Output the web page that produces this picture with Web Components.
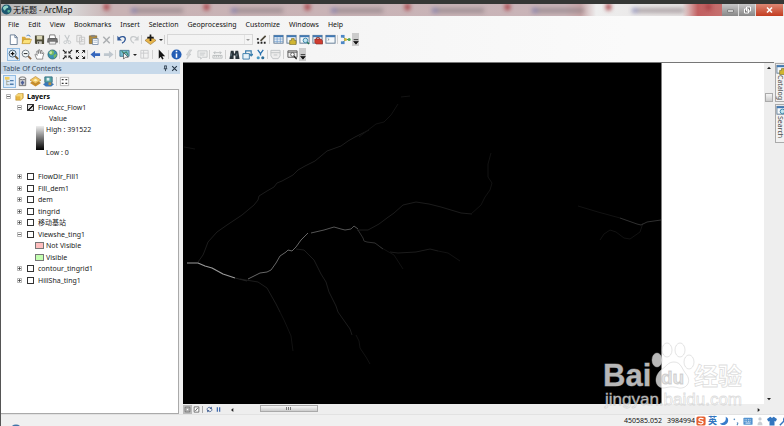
<!DOCTYPE html>
<html lang="zh-CN">
<head>
<meta charset="utf-8">
<title>无标题 - ArcMap</title>
<style>
html,body{margin:0;height:100%}
body{font:7px/11px "Noto Sans","Noto Sans CJK SC",sans-serif;color:#111;overflow:hidden}
</style>
</head>
<body>
<arc-window>
  <title-bar slot="title">无标题 - ArcMap</title-bar>
  <menu-bar slot="menu"></menu-bar>
  <tool-bar slot="tools" kind="standard"></tool-bar>
  <tool-bar slot="tools" kind="navigate"></tool-bar>
  <toc-panel slot="left" heading="Table Of Contents"></toc-panel>
  <map-view slot="main"></map-view>
  <side-tab slot="right" icon="catalog">Catalog</side-tab>
  <side-tab slot="right" icon="search">Search</side-tab>
  <status-bar slot="status"></status-bar>
</arc-window>
<script>
const define = (name, render, after) => customElements.define(name, class extends HTMLElement {
  connectedCallback() {
    if (this.shadowRoot) return;
    this.attachShadow({mode: 'open'}).innerHTML = render(this);
    if (after) after(this);
  }
});

const win = (body) => `<rect x="1" y="1.5" width="10" height="8.5" fill="#f4f8fb" stroke="#5f7892"/><path d="M1 2.500h10" stroke="#3f79b5" stroke-width="2"/>${body}`;
const icons = {
  blank: '',
  logo: '<circle cx="6" cy="6" r="5.500" fill="#1c5770"/><path d="M2 4c2-3 5-3 6-1 0 2-2 1-3 3s-2 1-3-2z" fill="#8fd3c5"/><path d="M7 7c2-1 3 0 3 1-1 2-3 2-3 0z" fill="#5cb49a"/>',
  new: '<path d="M2.500 1h5l2.500 2.500V11.500h-7.500z" fill="#fff" stroke="#667a92"/><path d="M7.500 1v3h2.500" fill="none" stroke="#667a92"/>',
  open: '<path d="M1 10.500V3h3.500l1 1.500H10v6z" fill="#d9a83a"/><path d="M1 10.500l2-4.500h8.500l-2 4.500z" fill="#fbe27a" stroke="#b58a28" stroke-width=".6"/><path d="M6 2c2-1.500 4-.5 4 1" fill="none" stroke="#4d7fb8"/>',
  save: '<path d="M1 1.500h10v9.500H2L1 10z" fill="#4d4b37"/><path d="M3 2h6v4H3z" fill="#d9d6b5"/><path d="M3.500 8h5v3h-5z" fill="#c8c6c0"/><path d="M5 8.500v2" stroke="#333"/>',
  print: '<path d="M3 1h5.500l1 4h-7z" fill="#fff" stroke="#555" stroke-width=".8"/><path d="M1 5h10l.5 4h-11z" fill="#777" stroke="#444" stroke-width=".6"/><path d="M2.500 8h7v3h-7z" fill="#eee" stroke="#555" stroke-width=".6"/>',
  cut: '<path d="M3 1l4 7M8 1L5 8" stroke="#c4c8ca" stroke-width="1.200"/><circle cx="3.500" cy="9" r="1.500" fill="none" stroke="#c4c8ca"/><circle cx="8" cy="9" r="1.500" fill="none" stroke="#c4c8ca"/>',
  copy: '<path d="M2 1.500h5v7H2zM5 3.500h5.500v7.500H5z" fill="#eee" stroke="#c5c5c5"/><path d="M6.500 6h3M6.500 8h3" stroke="#ccc"/>',
  paste: '<path d="M1.500 2h8v8.500h-8z" fill="#b18b3c" stroke="#755c2c" stroke-width=".7"/><path d="M3.500 1h4v2h-4z" fill="#888"/><path d="M5 5h6v6.500H5z" fill="#fff" stroke="#617998" stroke-width=".8"/><path d="M6 7h4M6 9h4" stroke="#8ba2bd" stroke-width=".7"/>',
  del: '<path d="M2.500 3l7 7M9.500 3l-7 7" stroke="#abaeb1" stroke-width="1.600"/>',
  undo: '<path d="M3 5c3-4 8-2 7 1.500-.5 2-2 3-3.500 3.500" fill="none" stroke="#2f5797" stroke-width="1.400"/><path d="M1.500 2v5h5z" fill="#2f5797"/>',
  redo: '<path d="M9 5C6 1 1 3 2 6.500c.5 2 2 3 3.500 3.500" fill="none" stroke="#c7cacc" stroke-width="1.400"/><path d="M10.500 2v5h-5z" fill="#c7cacc"/>',
  add: '<path d="M0 7l6-4.500L12 7l-6 4.500z" fill="#e8b64c" stroke="#8f6c2c" stroke-width=".6"/><path d="M6 .5v7M2.500 4h7" stroke="#1b1b1b" stroke-width="1.800"/>',
  editor: '<path d="M1.500 9.500h9" stroke="#222" stroke-dasharray="2 1.500" stroke-width="2"/><path d="M10.500 2L5 7.500" stroke="#4c4637" stroke-width="1.800"/><circle cx="2" cy="5.500" r="1.200" fill="#333"/>',
  table: win('<path d="M1 5.500h10M1 8h10M4.500 3.500V10M8 3.500V10" stroke="#6c9acb" stroke-width=".8"/>'),
  catalog: win('<path d="M4 7h2V5h3v2h2v4.500H4z" fill="#d0b530" stroke="#766b28" stroke-width=".7"/>'),
  search: win('<circle cx="7" cy="7" r="2.500" fill="#bfe5ef" stroke="#3680a5"/><path d="M9 9l2 2" stroke="#207452" stroke-width="1.500"/>'),
  toolbox: win('<path d="M3 5.500h7l1.500 2v3.500H4.500L3 9z" fill="#cf3c30" stroke="#7e2721" stroke-width=".6"/><path d="M5 5.500V4h3v1.500" fill="none" stroke="#842a24"/>'),
  python: win('<path d="M3 5l1.500 1L3 7" fill="none" stroke="#777" stroke-width=".7"/>'),
  model: '<path d="M3 2.500l3 3.500-3 3.500M6 6h4" fill="none" stroke="#3b7d4d"/><path d="M1 1h4v3H1z" fill="#4d87c7"/><path d="M1 8h4v3H1z" fill="#4d87c7"/><circle cx="6" cy="6" r="1.700" fill="#d5b638"/><circle cx="10" cy="6" r="1.700" fill="#51a35b"/>',
  over: '<path d="M4 5h5M4 7h5l-2.500 3z" fill="#111" stroke="#111" stroke-width=".8"/>',
  zoomin: '<path d="M7.500 7.500l3.500 3.500" stroke="#6d5432" stroke-width="2"/><circle cx="5" cy="5" r="3.800" fill="#edf7fd" stroke="#39566f"/><path d="M3 5h4M5 3v4" stroke="#111" stroke-width="1.300"/>',
  zoomout: '<path d="M7.500 7.500l3.500 3.500" stroke="#8d6845" stroke-width="2"/><circle cx="5" cy="5" r="3.800" fill="#f5fafb" stroke="#6c7780"/><path d="M3 5h4" stroke="#333" stroke-width="1.200"/>',
  pan: '<path d="M3 11L1 6l1-.5 1.500 1.500L3 2.500l1-.5 1 3V1l1.200-.2L7 5l.5-3.500 1.200.2V5.500L10 4l.8.6L9.500 9v2z" fill="#fff" stroke="#6b6b6b" stroke-width=".8"/>',
  globe: '<circle cx="6" cy="6" r="5" fill="#3b91b6" stroke="#245b58" stroke-width=".7"/><path d="M2 4l3-3 3 2-1 3-3 1zM7 7l3-2 .5 2-2.500 3z" fill="#79bc5e"/><circle cx="4" cy="4" r="1.500" fill="#e5f6cf" opacity=".7"/>',
  fixin: '<path d="M1 1l3 3M11 1L8 4M1 11l3-3M11 11L8 8" stroke="#222" stroke-width="1.400"/><path d="M5 2v3H2zM7 2v3h3zM5 10V7H2zM7 10V7h3z" fill="#222"/>',
  fixout: '<path d="M2 2l2.500 2.500M10 2L7.500 4.500M2 10l2.500-2.500M10 10L7.500 7.500" stroke="#222"/><path d="M1 1h3.500L1 4.500zM11 1H7.500L11 4.500zM1 11h3.500L1 7.500zM11 11H7.500L11 7.500z" fill="#222"/>',
  back: '<path d="M.5 6l5-4v2.500H11v3H5.500V10z" fill="#3566bd"/>',
  fwd: '<path d="M11.500 6l-5-4v2.500H1v3h5.500V10z" fill="#bfc7ce"/>',
  select: '<path d="M1 1.500h10V8H1z" fill="#75bdd0" stroke="#497b94"/><path d="M3 2l2 3 3-2 2 4" fill="none" stroke="#317a4d"/><path d="M5 4v7l2-2h3z" fill="#fff" stroke="#333" stroke-width=".7"/>',
  clear: '<path d="M2 1.500h8v8.500H2zM2 4.500h8M5 1.500V10" fill="none" stroke="#cacccd"/>',
  pointer: '<path d="M3 .5v10l2.200-2 1.600 3 1.500-.8L6.800 8H10z" fill="#151515"/>',
  info: '<circle cx="6" cy="6" r="5.500" fill="#245eb5"/><path d="M6 5v4.500M6 2v1.500" stroke="#fff" stroke-width="1.700"/>',
  start: '<circle cx="6" cy="6" r="5.500" fill="#3f74a8"/>',
  link: '<path d="M8.500 1L5.500 5.500h2L3 11l1.500-4.500h-2L6 1z" fill="#d7d9da" stroke="#bfc2c4" stroke-width=".6"/>',
  popup: '<path d="M1 2h10v7H6l-2 2V9H1zM3 4.500h6M3 6.500h5" fill="#eee" stroke="#bfc2c4" stroke-width=".9"/>',
  measure: '<path d="M1 7h10v3H1zM3 7v2M5 7v2M7 7v2M9 7v2M2 4h8M3.500 2.500L2 4l1.500 1.500M8.500 2.500L10 4 8.500 5.500" fill="none" stroke="#b5b8ba" stroke-width=".9"/>',
  find: '<path d="M2 2h3l.5 3h1L7 2h3l1.500 9H7V7H5v4H.5z" fill="#29343b"/><path d="M2 8l.5-3M8.500 8V5" stroke="#8ba0ac" stroke-width=".8"/>',
  route: '<path d="M1 5h7v6H1z" fill="#e8f2f8" stroke="#397cab"/><path d="M4 5V2h6v5M8 5.500l2 2 2-2" fill="none" stroke="#397cab" stroke-width="1.300"/>',
  xy: '<path d="M3 1l3 4 3-4M6 5v2" fill="none" stroke="#2670ae" stroke-width="1.400"/><circle cx="3.500" cy="9.500" r="1.700" fill="#4d9bc4"/><circle cx="8.500" cy="9.500" r="1.700" fill="#2f6e98"/>',
  time: '<path d="M1 1.500h10v6l-2 3H3l-2-3z" fill="#ededed" stroke="#c0c3c5"/><path d="M1 4h10M4 6.500h4" stroke="#c0c3c5"/>',
  viewer: '<path d="M1 2h10v7H1z" fill="#eee" stroke="#555"/><path d="M1 3.500h10" stroke="#555"/><circle cx="6" cy="6" r="2" fill="#fff" stroke="#555"/><path d="M7.500 7.500l3 3.500" stroke="#222" stroke-width="1.500"/>',
  order: '<path d="M1 1h5v3H1z" fill="#f1cc5c"/><path d="M3 4v6M3 6h3M3 9.500h3" stroke="#8c8b76" stroke-width=".7"/><path d="M6.500 5h4M6.500 9h4" stroke="#507fae" stroke-width="1.500"/>',
  source: '<path d="M2.500 2.500h7v8h-7z" fill="#c7c7ca" stroke="#555" stroke-width=".8"/><ellipse cx="6" cy="2.500" rx="3.500" ry="1.500" fill="#eee" stroke="#555" stroke-width=".8"/><path d="M6 5l2 2-2 3-2-3z" fill="#4e6098"/>',
  visible: '<path d="M0 7.500l6 4 6-4-6-4z" fill="#c88d2b"/><path d="M0 4.500l6-4 6 4-6 4z" fill="#f1c561" stroke="#aa7929" stroke-width=".6"/><path d="M3.500 4.500L6 3l2.500 1.500L6 6z" fill="#fff1b9"/>',
  selection: '<path d="M2 1h8v6H2z" fill="#56a6a4" stroke="#376d87"/><path d="M4 2h3v3H4z" fill="#e1eef2"/><path d="M0 9l3-2h6l3 2-3 2.500H3z" fill="#3977ba"/><path d="M6 7h3v3H6z" fill="#b8923e"/>',
  options: '<path d="M1.500 1.500h9v9h-9z" fill="#fff" stroke="#a2a2a2" stroke-width=".8"/><path d="M3 4h2M3 8h2M7 4h2M7 8h2" stroke="#333" stroke-width="1.500"/>',
  layers: '<path d="M1 5l3-3h7v6l-3 3H1z" fill="#e8b540" stroke="#a67b24" stroke-width=".6"/><path d="M3 3h6v5M1 5h7v6" fill="none" stroke="#fff0a5"/>',
  data: '<path d="M2 2h8v8H2z" fill="#ddd" stroke="#444"/><path d="M4 4h4v4H4z" fill="#fff" stroke="#777"/>',
  layout: '<path d="M2 1.500h8v9H2z" fill="#fff" stroke="#555" stroke-width="1.300"/><path d="M4 8.500l4-5" stroke="#555" stroke-width="1.500"/>',
  refresh: '<path d="M2 7c-1-5 5-6 7-3M10 5c1 5-5 6-7 3" fill="none" stroke="#3c5b91" stroke-width="1.400"/><path d="M10 1v4H6zM2 11V7h4z" fill="#3c5b91"/>',
  pause: '<path d="M4 2v8M8 2v8" stroke="#3460a8" stroke-width="2"/>',
  left: '<path d="M8 3v6L4.500 6z" fill="#222"/>', right: '<path d="M4 3v6l3.500-3z" fill="#222"/>',
  up: '<path d="M3 7.500h6L6 4z" fill="#222"/>', down: '<path d="M3 4.500h6L6 8z" fill="#222"/>',
  pin: '<path d="M4 1.500h4M4.500 1.500v5M7.500 1.500v5M3 6.500h6M6 6.500v4" fill="none" stroke="#234" stroke-width="1.400"/>',
  close: '<path d="M2 2l8 8M10 2l-8 8" stroke="#234" stroke-width="1.800"/>',
  sogou: '<rect x=".5" y=".5" width="11" height="11" rx="2" fill="#e65f2f"/><path d="M9 3.500C6 2 3 3 3.500 5s5 .5 5 2.500S5 10 2.500 8.500" fill="none" stroke="#fff" stroke-width="1.500"/>',
  moon: '<path d="M8 1c1 5-2 8-7 8 4 4 10 1 10-4 0-2-1-3-3-4z" fill="#397ccb"/>',
  punct: '<circle cx="4" cy="4" r="1" fill="#5689bd"/><path d="M7 8c2 0 1 2 0 3" fill="none" stroke="#5689bd" stroke-width="1.300"/>',
  keyboard: '<rect x=".5" y="2" width="11" height="8.500" rx="1" fill="#5192d0"/><path d="M2 4.500h8M2 6.500h8" stroke="#fff" stroke-dasharray="1 1"/><path d="M3 8.500h6" stroke="#fff"/>',
  person: '<circle cx="6" cy="3.500" r="2" fill="#c9ced4"/><path d="M3 11c0-6 6-6 6 0z" fill="#c9ced4"/>',
  shirt: '<path d="M4 1l2 1.500L8 1l4 2.500-1.500 3L9 6v5.500H3V6l-1.500.5L0 3.500z" fill="#3375bf"/>',
  wrench: '<path d="M1 11l5-5M6 6c-1-3 1-5 3-4L7.500 4l1.500 1.500 2-1.500c1 3-2 5-5 2z" fill="none" stroke="#3375bf" stroke-width="1.800"/>'
};

define('arc-icon', el => `<style>:host{display:block;width:11px;height:11px;flex:none}svg{display:block;width:100%;height:100%}</style><svg viewBox="0 0 12 12" aria-hidden="true">${icons[el.getAttribute('name')]}</svg>`);

define('tool-button', el => `<style>
:host{display:flex;width:13px;height:13px;flex:none}
:host([caret]){width:21px}
button{all:unset;box-sizing:border-box;flex:1;display:flex;align-items:center;justify-content:center;gap:3px}
:host([active]) button{background:#dcebfa;outline:1px solid #92bce2;outline-offset:-1px}
:host([over]){width:7px}
:host([over]) button{background:#ccc;overflow:hidden;align-items:flex-end}
i{width:0;border:2px solid transparent;border-top-color:#222;border-bottom:0}
</style><button type="button" aria-label="${el.getAttribute('icon')}"><arc-icon name="${el.getAttribute('icon')}"></arc-icon>${el.hasAttribute('caret') ? '<i></i>' : ''}</button>`);

define('arc-window', () => `<style>
:host{display:flex;flex-direction:column;height:100vh;background:#f0f0f0;box-sizing:border-box;border-left:1px solid #555}
header{background:linear-gradient(90deg,#f0f0f0,#fafafa 80%);height:46px;flex:none;display:flex;flex-direction:column}
main{display:flex;flex:1;min-height:0}
aside{width:10px;flex:none;display:flex;flex-direction:column;gap:2px;background:#eee;padding-top:1px;overflow:hidden}
</style><slot name="title"></slot><header><slot name="menu"></slot><slot name="tools"></slot></header><main><slot name="left"></slot><slot name="main"></slot><aside><slot name="right"></slot></aside></main><slot name="status"></slot>`);

define('title-bar', () => `<style>
:host{display:flex;align-items:stretch;height:12px;flex:none;border-top:4px solid #353735;background:linear-gradient(90deg,#b4b4b4,#d8d6d6 9%,#c8b2b4 14%,#c9b4b8 72%,#c9a6a8 74%,#eee 76%,#e7e3e3 87%,#c25f60 89%,#c77674 93%,#aaa 94%);overflow:hidden;color:#111;font-size:8px}
h1{margin:0;font:inherit;line-height:12px;display:flex;gap:1px;white-space:nowrap;width:92px;flex:none}
.tabs{flex:1;display:flex;justify-content:space-around;align-items:center;filter:blur(2px)}
.tabs i{width:46px;height:5px;background:#8b7d82;opacity:.6;border-left:6px solid #6a6aa2}
.tabs b{width:5px;height:6px;align-self:flex-start;background:#a83c42}
nav{display:flex;flex:none}
button{all:unset;width:16px;background:linear-gradient(#c6c6c6,#888);border-right:1px solid #ddd;display:grid;place-items:center}
button.x{width:27px;background:linear-gradient(#dd8874,#c33c20)}
svg{width:9px;height:8px;display:block}
</style><h1><arc-icon name="logo"></arc-icon><slot></slot></h1><div class="tabs"><b></b><i></i><b></b><i></i><b></b><i></i><b></b><i></i><b></b><i></i><b></b><i></i><b></b></div>
<nav><button aria-label="Minimize"><svg viewBox="0 0 9 8"><path d="M1.500 4h6v2h-6z" fill="#fff" stroke="#555" stroke-width=".6"/></svg></button><button aria-label="Restore"><svg viewBox="0 0 9 8"><path d="M3.500 1h4v4h-4zM1.500 3h4v4h-4z" fill="#777" stroke="#fff"/></svg></button><button class="x" aria-label="Close"><svg viewBox="0 0 9 8"><path d="M2 1.500l5 5M7 1.500l-5 5" stroke="#fff" stroke-width="1.600"/></svg></button></nav>`);

define('menu-bar', () => `<style>
:host{display:block;height:16px}
nav{display:flex;gap:9px;padding-left:7px;line-height:17px}
button{all:unset;white-space:nowrap}
</style><nav>${['File','Edit','View','Bookmarks','Insert','Selection','Geoprocessing','Customize','Windows','Help'].map(t => `<button type="button">${t}</button>`).join('')}</nav>`);

const sets = {
  standard: 'new open save print | cut copy paste del | undo redo | add^ | [] editor || table catalog search toolbox python | model over!',
  navigate: 'zoomin* zoomout pan globe | fixin fixout | back fwd | select^ clear || pointer | info link popup | measure || find route xy | time || viewer over!'
};
define('tool-bar', el => `<style>
:host{display:flex;align-items:center;height:15px;padding-left:6px}
hr{width:1px;height:9px;margin:0 1px 0 0;border:0;background:#d0d0d0;flex:none}
hr.wide{margin:0 2px 0 1px}
select{box-sizing:border-box;width:86px;height:11px;margin:0 2px 0 1px;font:inherit;border:1px solid #ccc;border-radius:0;padding:0;color:#aaa;appearance:none;background:linear-gradient(90deg,#f4f4f4 76px,#ddd 76px,#ddd 77px,#f4f4f4 77px)}
label{position:relative;display:flex}
label i{position:absolute;right:5px;top:5px;border:2px solid transparent;border-top-color:#999;border-bottom:0}
</style>${sets[el.getAttribute('kind')].split(' ').map(t =>
  t === '|' ? '<hr>' : t === '||' ? '<hr class="wide">' :
  t === '[]' ? '<label><select aria-label="Map scale" disabled></select><i></i></label>' :
  `<tool-button icon="${t.replace(/[\^*!]/, '')}"${t.endsWith('^') ? ' caret' : t.endsWith('*') ? ' active' : t.endsWith('!') ? ' over' : ''}></tool-button>`).join('')}`);

define('layer-row', el => {
  const open = el.hasAttribute('open'), check = el.hasAttribute('check'), swatch = el.getAttribute('swatch');
  const lead = swatch ? `<i style="background:${swatch}"></i>` : `<button type="button" aria-label="${open ? 'Collapse' : 'Expand'}"><svg viewBox="0 0 5 5"><path d="M.5.5h4v4h-4z" fill="#fff" stroke="#999" stroke-width=".7"/><path d="M1 2.500h3${open ? '' : 'M2.500 1v3'}" stroke="#333" stroke-width=".7"/></svg></button>`;
  return `<style>
:host{display:flex;align-items:center;height:11px;padding-left:16px;white-space:nowrap}
:host([root]){padding-left:5px;font-weight:bold;color:#000}
:host([swatch]){padding-left:34px}
button{all:unset;width:5px;height:5px;margin-right:5px;display:block}
:host([root]) button{margin-right:4px}
svg{display:block}
label{display:flex;align-items:center;gap:4px}
:host([root]) label{gap:3px}
input{appearance:none;box-sizing:border-box;width:7px;height:7px;margin:0;border:1px solid #333;background:#fff}
input:checked{background:linear-gradient(135deg,transparent 45%,#222 45% 65%,transparent 65%),#ddd}
i{box-sizing:border-box;width:9px;height:7px;border:1px solid #777;margin-right:2px}
arc-icon{width:9px;height:9px}
</style>${lead}<label>${el.hasAttribute('root') ? '<arc-icon name="layers"></arc-icon>' : swatch ? '' : `<input type="checkbox"${check ? ' checked' : ''}>`}<slot></slot></label>`;
});

define('toc-panel', el => `<style>
:host{display:flex;flex-direction:column;width:182px;flex:none;padding-right:3px;box-sizing:border-box;min-height:0}
header{display:flex;align-items:center;height:12px;background:#c7d9ea;color:#3b4c60;padding:0 1px 0 2px}
h2{margin:0;font:inherit;flex:1}
header button{all:unset;width:9px;height:9px;display:grid;place-items:center}
header arc-icon{width:7px;height:7px}
.bar{display:flex;align-items:center;height:15px;background:#f5f5f5;padding-left:2px}
hr{width:1px;height:9px;margin:0 1px;border:0;background:#ccc}
section{flex:1;min-height:0;background:#fff;border:1px solid #aaa;border-left:0;margin-right:1px;padding-top:1px;overflow:hidden;color:#222}
.value{padding-left:48px}
.ramp{display:grid;grid-template-columns:8px 1fr;column-gap:2px;padding-left:35px;height:34px;margin-bottom:13px}
.ramp b{height:24px;margin-top:2px;background:linear-gradient(#eee,#000)}
.ramp div{display:flex;flex-direction:column;justify-content:space-between;height:34px}
.list layer-row:nth-child(even){height:12px}
</style><header><h2>${el.getAttribute('heading')}</h2><button aria-label="Auto hide"><arc-icon name="pin"></arc-icon></button><button aria-label="Close panel"><arc-icon name="close"></arc-icon></button></header>
<div class="bar"><tool-button icon="order" active></tool-button><tool-button icon="source"></tool-button><tool-button icon="visible"></tool-button><tool-button icon="selection"></tool-button><hr><tool-button icon="options"></tool-button></div>
<section><layer-row root open>Layers</layer-row><layer-row open check>FlowAcc_Flow1</layer-row><div class="value">Value</div>
<div class="ramp"><b></b><div><span>High : 391522</span><span>Low : 0</span></div></div>
<div class="list"><layer-row>FlowDir_Fill1</layer-row><layer-row>Fill_dem1</layer-row><layer-row>dem</layer-row><layer-row>tingrid</layer-row><layer-row>移动基站</layer-row><layer-row open>Viewshe_ting1</layer-row><layer-row swatch="#ffbebe">Not Visible</layer-row><layer-row swatch="#c3ffb0">Visible</layer-row><layer-row>contour_tingrid1</layer-row><layer-row>HillSha_ting1</layer-row></div></section>`);

define('scroll-bar', el => {
  const v = el.hasAttribute('vertical');
  return `<style>
:host{display:flex;flex-direction:${v ? 'column' : 'row'};background:#eee;flex:${v ? 'none' : '1'};${v ? 'width:10px' : 'height:9px'};overflow:hidden}
button{all:unset;width:10px;height:10px;display:grid;place-items:center}
arc-icon{width:8px;height:8px}
div{flex:1;display:flex;flex-direction:${v ? 'column' : 'row'}}
div::before{content:"";flex:5}
i{flex:none;${v ? 'height:9px;margin:0 1px' : 'width:58px;height:7px'};border:1px solid #aaa;box-sizing:border-box;background:linear-gradient(#f5f5f5,#ccc);display:grid;place-items:center}
${v ? '' : 'i::after{content:"";width:5px;height:3px;background:repeating-linear-gradient(90deg,#777 0 1px,transparent 1px 2px)}'}
div::after{content:"";flex:${v ? '75' : '95'}}
</style><button aria-label="${v ? 'Up' : 'Left'}"><arc-icon name="${v ? 'up' : 'left'}"></arc-icon></button><div><i></i></div><button aria-label="${v ? 'Down' : 'Right'}"><arc-icon name="${v ? 'down' : 'right'}"></arc-icon></button>`;
});

define('map-view', () => `<style>
:host{flex:1;min-width:0;display:grid;grid-template:minmax(0,1fr) 10px/minmax(0,1fr) 10px;border-top:1px solid #777;position:relative;background:#eee}
.map{background:#fff;overflow:hidden}
.map svg{display:block;width:100%;height:100%;fill:none;stroke-linejoin:round}
footer{display:flex;align-items:center;overflow:hidden;grid-column:1}
footer button{all:unset;width:9px;height:9px;display:grid;place-items:center}
footer arc-icon{width:7px;height:7px}
footer button:first-child{background:#bbb;width:9px}
footer hr{width:1px;height:7px;background:#aaa;border:0;margin:0 2px 0 1px}
scroll-bar:not([vertical]){margin-left:4px}
.mark{position:absolute;right:24px;bottom:0;width:150px;height:70px;pointer-events:none}
</style><div class="map"><svg viewBox="183 63 581 342" preserveAspectRatio="xMinYMin slice" role="img" aria-label="Flow accumulation raster">
<path d="M183 63h478.500v342H183z" fill="#000"/>
<g stroke="#1c1c1c"><path d="M198 262l5-7 2-5 3-8 9-10 10-7 15-10 12-10 4-5 1-4 8-5 7-4 3-4 5-2 11-6 5-5 7-4 10-5 12-10 14-5 7-5 7-4 14-7"/><path d="M357 230h11l11-6 8-6 7-5 9-8 13-3 13 2 12 3 20 6 11 1"/><path d="M296 249l8 1 10 10 7 14 5 8 3 10 7 14 2 6 12 17 2 6"/><path d="M240 279l18 3 9 6 9 16 4 8"/><path d="M390 252l8 1 18-1 14-3 8 2"/></g>
<g stroke="#121212"><path d="M359 137l17-13 8-2 7-7 7-11"/><path d="M471 214l10-9 4-8 5-7 2-7-4-6v-13l3-11"/><path d="M356 335l3 6 1 7 6 9 4 7"/><path d="M280 312l4 8 4 9 3 7 2 15"/><path d="M438 251l10 2 12 8M380 247l14 8 9 14"/><path d="M401 97l9-1M184 147l11 2"/><path d="M578 206l20 6 22 6M600 240l4-6 6-4 6 2 8 6 6 1 10-7 3-9"/></g>
<path d="M358 230l5 8 1 3 3 1 8 1 8 6" stroke="#303030"/>
<path d="M187 263h11l7 3 7 2 11 6 12 4" stroke="#999" stroke-width="1.200"/><path d="M235 278l12 3" stroke="#222"/>
<path d="M248 279l12-6 7-1 4-2 5-7 4-7 6-4 2-2 4 1 4-4 5-7 7-7" stroke="#666"/><path d="M311 233l13-3 10-3 7 2 4 1 6-1 3-3 4 3" stroke="#555"/>
<path d="M620 218l17 6 4 1 6-3 14-2" stroke="#303030"/></svg></div>
<scroll-bar vertical></scroll-bar>
<footer><button aria-label="Data view"><arc-icon name="data"></arc-icon></button><button aria-label="Layout view"><arc-icon name="layout"></arc-icon></button><hr><button aria-label="Refresh"><arc-icon name="refresh"></arc-icon></button><button aria-label="Pause drawing"><arc-icon name="pause"></arc-icon></button><scroll-bar></scroll-bar></footer>
<water-mark class="mark"></water-mark>`);

define('water-mark', () => `<style>:host{display:block}svg{width:100%;height:100%;display:block;overflow:visible}text{font-family:"Liberation Sans","Noto Sans CJK SC",sans-serif}</style>
<svg viewBox="600 345 150 70" fill="#fff" fill-opacity=".72" stroke="#bbb" stroke-opacity=".5" stroke-width=".8">
<ellipse cx="657" cy="361" rx="5" ry="7"/><ellipse cx="667" cy="351" rx="5" ry="7"/><ellipse cx="680" cy="351" rx="5" ry="7"/><ellipse cx="689" cy="363" rx="5" ry="7"/>
<path d="M661 371c6-4 7-8 13-8 7 0 8 7 12 12 6 7 1 15-7 14-7-2-10-1-15 0-9 0-11-11-3-18z"/>
<text x="603" y="387" font-size="31" font-weight="700">Bai</text><text x="661" y="385" font-size="19" font-weight="700" fill="#ddd" stroke="#aaa">du</text><text x="694" y="386" font-size="24" font-weight="700">经验</text>
<text x="605" y="406" font-size="17">jingyan.baidu.com</text></svg>`);

define('side-tab', el => `<style>
:host{display:block;flex:none}
button{all:unset;box-sizing:border-box;display:flex;flex-direction:column;align-items:flex-start;width:9px;height:39px;margin-left:1px;background:#f2f2f2;border:1px solid #aaa;border-right:0;color:#444}
span{writing-mode:vertical-rl;font-size:7px;line-height:8px}
</style><button type="button"><arc-icon name="${el.getAttribute('icon')}"></arc-icon><span><slot></slot></span></button>`);

define('status-bar', () => `<style>
:host{display:flex;justify-content:flex-end;align-items:center;height:12px;flex:none;background:#f0f0f0;border-top:1px solid #e2e2e2;box-sizing:border-box;overflow:hidden;color:#111}
p{margin:0;display:flex;gap:5px}
div{display:flex;gap:2px;align-items:center;background:#fff;width:89px;height:12px;padding-left:1px;box-sizing:border-box}
b{font-weight:bold;color:#3375bf;font-size:9px;flex:none}
arc-icon{width:10px;height:10px}
.globe{width:14px;height:14px;margin:20px auto 0 8px}
</style><arc-icon class="globe" name="start"></arc-icon><p><span>450585.052</span><span>3984994</span></p><div><arc-icon name="sogou"></arc-icon><b>英</b><arc-icon name="moon"></arc-icon><arc-icon name="punct"></arc-icon><arc-icon name="keyboard"></arc-icon><arc-icon name="person"></arc-icon><arc-icon name="shirt"></arc-icon><arc-icon name="wrench"></arc-icon></div>`);
</script>
</body>
</html>
